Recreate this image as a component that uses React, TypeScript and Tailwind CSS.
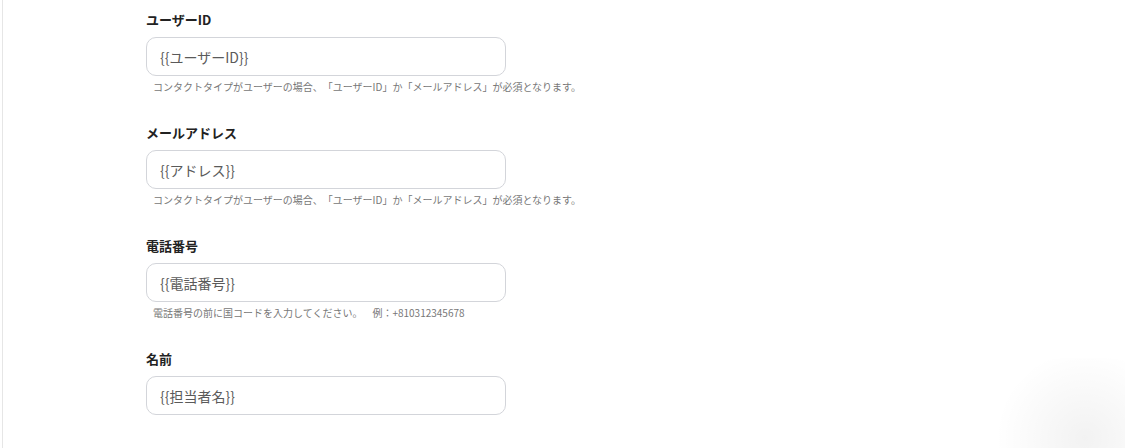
import React from 'react';

const fields = [
  {
    label: 'ユーザーID',
    value: '{{ユーザーID}}',
    help: 'コンタクトタイプがユーザーの場合、「ユーザーID」か「メールアドレス」が必須となります。',
  },
  {
    label: 'メールアドレス',
    value: '{{アドレス}}',
    help: 'コンタクトタイプがユーザーの場合、「ユーザーID」か「メールアドレス」が必須となります。',
  },
  {
    label: '電話番号',
    value: '{{電話番号}}',
    help: '電話番号の前に国コードを入力してください。\u3000例：+810312345678',
  },
  {
    label: '名前',
    value: '{{担当者名}}',
    help: '',
  },
];

export default function App() {
  return (
    <div
      className="relative h-[448px] w-[1125px] overflow-hidden bg-white [text-spacing-trim:space-all]"
      style={{ fontFamily: '"Noto Sans CJK JP", "Noto Sans", sans-serif' }}
    >
      <div className="ml-[2px] h-full border-l border-[#e6e6e6] pl-[143px] pt-[10px]">
        {fields.map((f) => (
          <div key={f.label} className="mb-[29px] w-[360px]">
            <label className="block text-[13px] font-bold leading-[20px] text-[#222]">{f.label}</label>
            <input
              readOnly
              defaultValue={f.value}
              className="mt-[7px] block h-[39px] w-[360px] rounded-[10px] border border-[#d3d5da] bg-white px-[13px] text-[14px] text-[#5a5a5a] outline-none"
            />
            {f.help && (
              <p className="mt-[4px] whitespace-nowrap pl-[7px] text-[10px] leading-[14px] text-[#777]">{f.help}</p>
            )}
          </div>
        ))}
      </div>
      <div className="pointer-events-none absolute bottom-[-70px] right-[-60px] h-[160px] w-[200px] rounded-full bg-[radial-gradient(circle,rgba(0,0,0,0.05),rgba(0,0,0,0)_70%)]" />
    </div>
  );
}
